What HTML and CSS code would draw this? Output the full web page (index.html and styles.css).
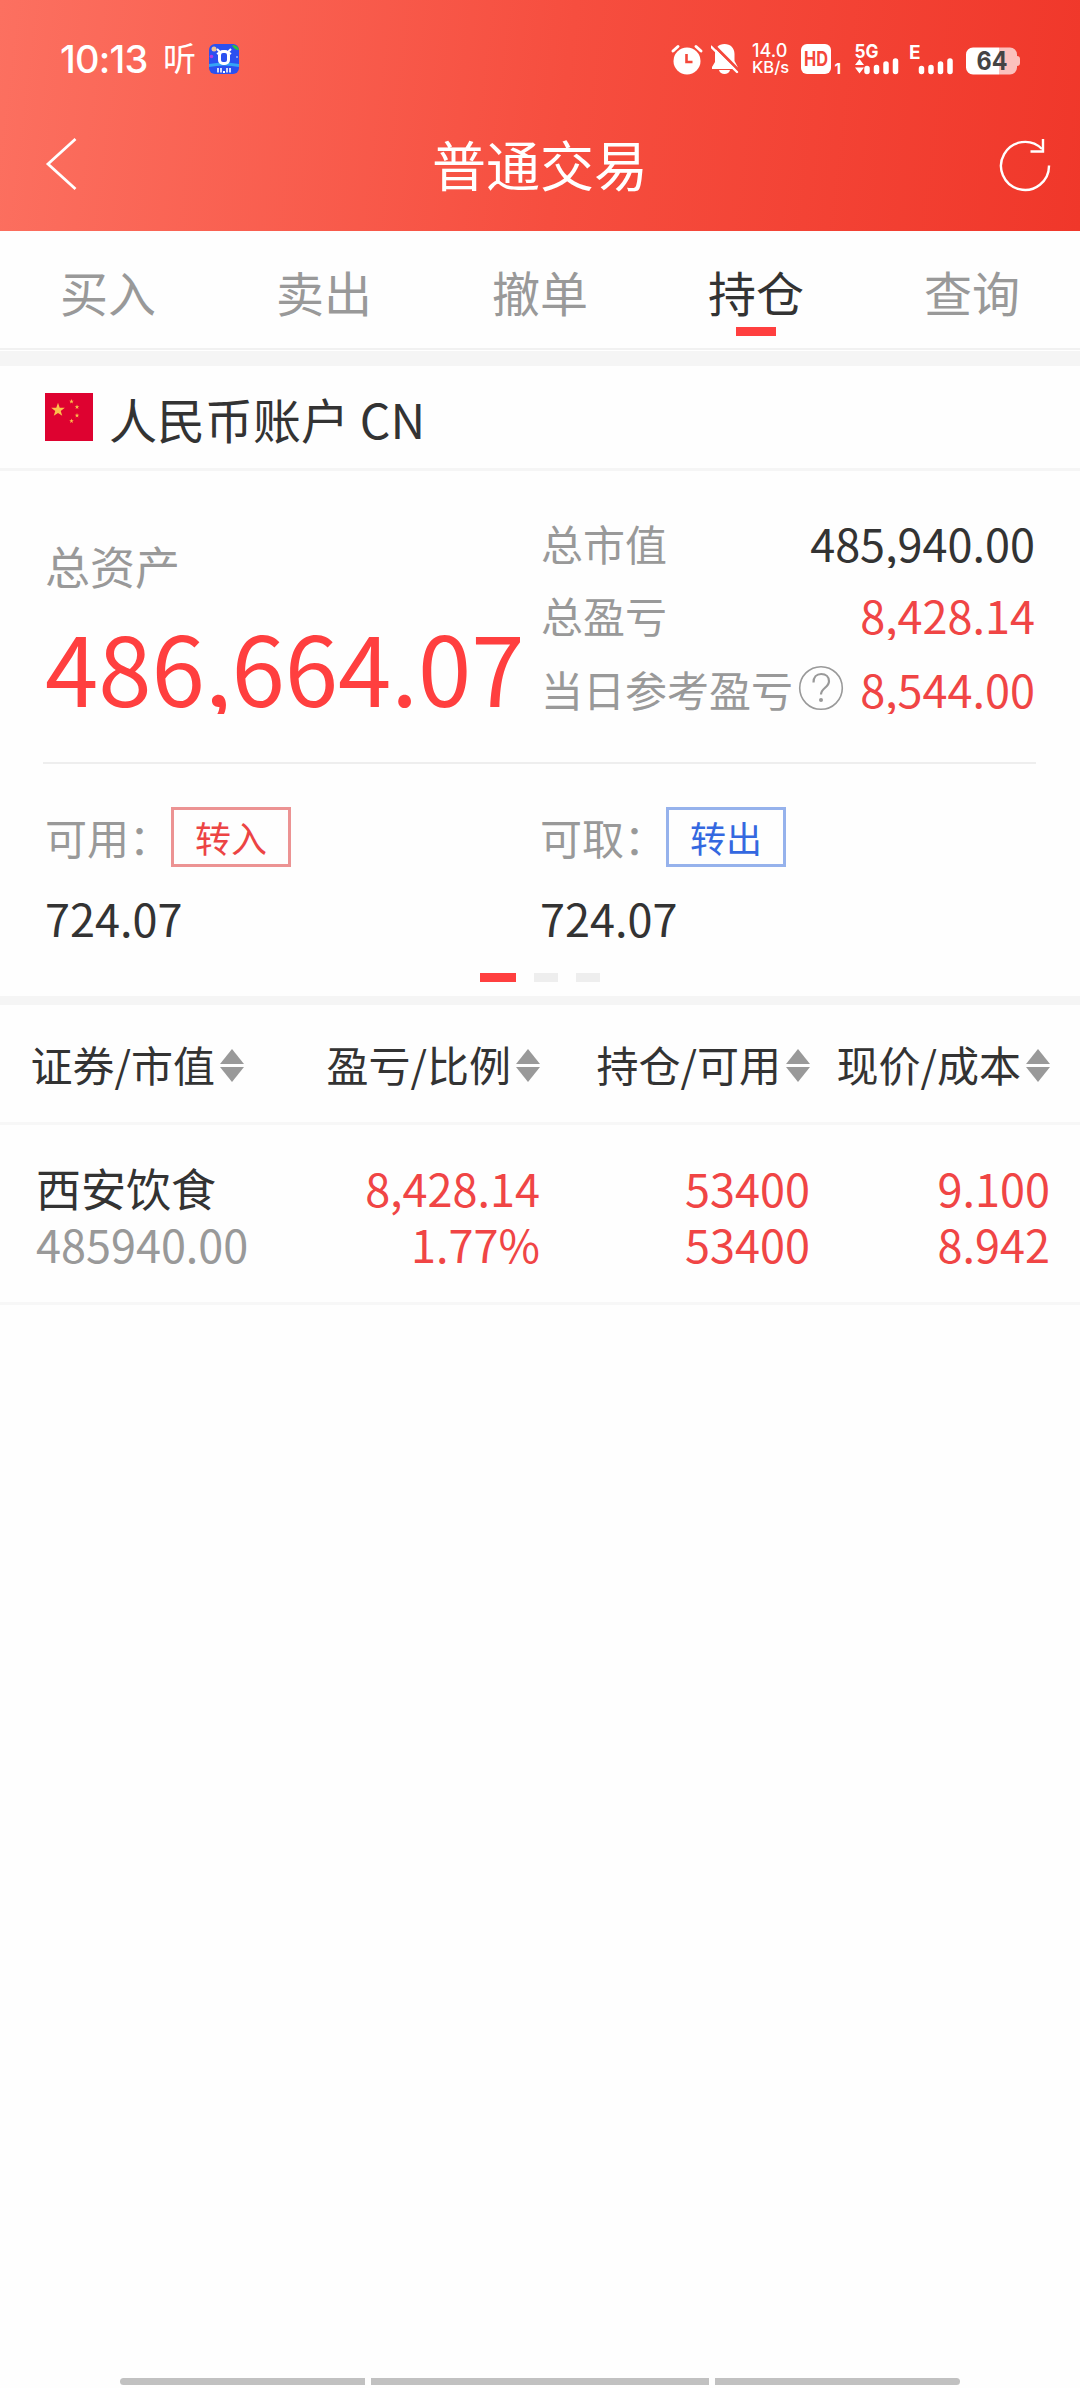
FILE: index.html
```html
<!DOCTYPE html>
<html lang="zh-CN">
<head>
    <meta charset="UTF-8">
    <meta name="viewport" content="width=device-width, initial-scale=1.0">
    <title>普通交易</title>
    <link rel="stylesheet" href="styles.css">
</head>
<body>
    <header class="header">
        <!-- Status bar -->
        <div class="status-bar">
            <span class="clock">10:13</span>
            <span class="carrier">听</span>
            <svg class="app-icon" width="30" height="30" viewBox="0 0 30 30">
                <rect width="30" height="30" rx="6" fill="#2b50f0"/>
                <path d="M0 20q15-3 30 0v3q-15-3-30 0z" fill="#35a5f5"/>
                <path d="M23 1q6 0 7 5q-5 0-7-5z" fill="#2fc53a"/>
                <circle cx="5" cy="5" r="2.500" fill="#e9c49a"/>
                <circle cx="2.500" cy="12.500" r="1.800" fill="#b43be0"/>
                <circle cx="28" cy="13" r="1" fill="#9ab8ff"/>
                <path d="M8 5l3 3h8l3-3M8 10l3-2M22 10l-3-2" fill="none" stroke="#fff" stroke-width="2"/>
                <rect x="10.500" y="7.500" width="9" height="12" rx="3.500" fill="#2b50f0" stroke="#fff" stroke-width="3"/>
                <path d="M9 24v4.500M12 24v4.500M18 24v4.500M21 24v4.500" stroke="#fff" stroke-width="1.600"/>
                <rect x="14" y="27" width="2" height="2" fill="#fff"/>
            </svg>

            <div class="status-right">
                <svg width="30" height="30" viewBox="0 0 30 30">
                    <circle cx="15" cy="17" r="13.500" fill="#fff"/>
                    <path d="M1 7l5-4.500M29 7l-5-4.500" stroke="#fff" stroke-width="3" stroke-linecap="round"/>
                    <path d="M14.500 10v8h6" fill="none" stroke="#f4473a" stroke-width="2.600"/>
                </svg>
                <svg class="bell" width="28" height="30" viewBox="0 0 28 30">
                    <path d="M13.500 0c6 0 10 4 10 10v7l3 5.500v2.500H1v-2l3-5v-8c0-6 3.500-10 9.500-10zM8 26h11c-1 5.300-10 5.300-11 0z" fill="#fff"/>
                    <path d="M1.500 0L29 27.500" stroke="#f4473a" stroke-width="3"/>
                    <path d="M0 2.500L26 28" stroke="#fff" stroke-width="2.400" stroke-linecap="round"/>
                </svg>
                <div class="net-speed"><span>14.0</span><span>KB/s</span></div>
                <svg class="hd" width="40" height="30" viewBox="0 0 40 30">
                    <rect width="30" height="30" rx="6" fill="#fff"/>
                    <text class="hd-text" x="3" y="22" textLength="24" lengthAdjust="spacingAndGlyphs">HD</text>
                    <text class="sim-text" x="33.500" y="29.500">1</text>
                </svg>
                <svg class="signal" width="44" height="30" viewBox="0 0 44 30">
                    <text class="net-text" x="-.500" y="14" textLength="24" lengthAdjust="spacingAndGlyphs">5G</text>
                    <path d="M0 21l4.500-6 4.500 6zM0 23.500h9l-4.500 6z" fill="#fff"/>
                    <path d="M12 24.500v3M21.500 23.500v4M31 20v7.500M40.500 17v10.500" stroke="#fff" stroke-width="5.500" stroke-linecap="round"/>
                </svg>
                <svg class="signal-e" width="44" height="30" viewBox="0 0 44 30">
                    <text class="net-text" x="-10" y="15">E</text>
                    <path d="M2.500 24.500v3M12 23.500v4M21.500 20v7.500M31 17v10.500" stroke="#fff" stroke-width="5.500" stroke-linecap="round"/>
                </svg>
                <svg class="battery" width="54" height="28" viewBox="0 0 54 28">
                    <path d="M7 .5h37a7 7 0 0 1 7 7V9q3 0 3 3v4q0 3-3 3v1.500a7 7 0 0 1-7 7H33V.5z" fill="#fbc1bd"/>
                    <path d="M7 .5h26v27H7a7 7 0 0 1-7-7v-13a7 7 0 0 1 7-7z" fill="#fff"/>
                    <text class="battery-text" x="10.500" y="23" textLength="31" lengthAdjust="spacingAndGlyphs">64</text>
                </svg>
            </div>
        </div>

        <!-- Title bar -->
        <div class="nav-bar">
            <svg width="32" height="54" viewBox="0 0 32 54">
                <path d="M30.500 2L3 27l27.500 25" fill="none" stroke="#fff" stroke-width="2.800"/>
            </svg>
            <h1 class="title">普通交易</h1>
            <svg width="52" height="54" viewBox="0 0 52 54">
                <path d="M50 28.500A24 24 0 1 1 43 12" fill="none" stroke="#fff" stroke-width="2.400"/>
                <path d="M44 2v12.500H31.500" fill="none" stroke="#fff" stroke-width="2.400"/>
            </svg>
        </div>
    </header>

    <nav class="tabs">
        <a class="tab">买入</a>
        <a class="tab">卖出</a>
        <a class="tab">撤单</a>
        <a class="tab active">持仓</a>
        <a class="tab">查询</a>
    </nav>

    <section class="account">
        <svg width="48" height="48" viewBox="0 0 48 48">
            <defs>
                <polygon id="star" points="0,-10 2.350,-3.240 9.510,-3.090 3.800,1.240 5.880,8.090 0,4 -5.880,8.090 -3.800,1.240 -9.510,-3.090 -2.350,-3.240"/>
            </defs>
            <rect width="48" height="48" fill="#de0230"/>
            <g fill="#fcc04c">
                <use href="#star" transform="translate(13 17) scale(.72)"/>
                <use href="#star" transform="translate(26.500 8.500) scale(.24)"/>
                <use href="#star" transform="translate(32 14) scale(.24)"/>
                <use href="#star" transform="translate(32 22.500) scale(.24)"/>
                <use href="#star" transform="translate(26.500 28) scale(.24)"/>
            </g>
        </svg>
        <span class="account-name">人民币账户 CN</span>
    </section>

    <!-- Assets -->
    <section class="assets">
        <div class="overview">
            <div class="total">
                <div class="total-label">总资产</div>
                <div class="total-value">486,664.07</div>
            </div>
            <div class="stats">
                <div class="stat"><span class="label">总市值</span><span class="value">485,940.00</span></div>
                <div class="stat"><span class="label">总盈亏</span><span class="value red">8,428.14</span></div>
                <div class="stat last">
                    <span class="label">当日参考盈亏</span>
                    <svg class="help" width="46" height="46" viewBox="0 0 46 46" fill="none" stroke="#999">
                        <circle cx="23" cy="23" r="21.300" stroke-width="1.600"/>
                        <path d="M15.500 17.500c0-5.500 3-8.500 7.700-8.500s7.800 3 7.800 7.200c0 6.300-8 6.800-8 13.300" stroke-width="2.200"/>
                        <circle cx="23" cy="35" r="2" fill="#999" stroke="none"/>
                    </svg>
                    <span class="value red">8,544.00</span>
                </div>
            </div>
        </div>
        <div class="funds">
            <div class="fund">
                <div class="fund-head"><span class="label">可用：</span><button class="btn btn-in">转入</button></div>
                <div class="fund-value">724.07</div>
            </div>
            <div class="fund">
                <div class="fund-head"><span class="label">可取：</span><button class="btn btn-out">转出</button></div>
                <div class="fund-value">724.07</div>
            </div>
        </div>
        <div class="dots"><i class="dot on"></i><i class="dot"></i><i class="dot"></i></div>
    </section>

    <!-- Holdings -->
    <section class="holdings">
        <div class="row head">
            <div class="cell">证券/市值<i class="sort"></i></div>
            <div class="cell">盈亏/比例<i class="sort"></i></div>
            <div class="cell">持仓/可用<i class="sort"></i></div>
            <div class="cell">现价/成本<i class="sort"></i></div>
        </div>
        <div class="row stock">
            <div class="stock-name"><p>西安饮食</p><p class="gray">485940.00</p></div>
            <div class="red"><p>8,428.14</p><p>1.77%</p></div>
            <div class="red"><p>53400</p><p>53400</p></div>
            <div class="red"><p>9.100</p><p>8.942</p></div>
        </div>
    </section>

    <footer class="gesture-bar"><i></i><i class="wide"></i><i></i></footer>
</body>
</html>
```
FILE: styles.css
```css
/* General Reset */
* {
    margin: 0;
    padding: 0;
    box-sizing: border-box;
}

body {
    width: 1080px;
    height: 2388px;
    display: flex;
    flex-direction: column;
    font-family: "Noto Sans CJK SC", sans-serif;
    font-size: 45px;
    color: #333;
    background: #fefefe;
    overflow: hidden;
}

svg {
    display: block;
    flex: none;
    overflow: visible;
}

/* Header */
.header {
    height: 231px;
    background: linear-gradient(97deg, #fc7060 0%, #f64e3f 52%, #f0372a 100%);
    color: #fff;
}

.status-bar {
    height: 96px;
    padding: 22px 60px 0;
    display: flex;
    align-items: center;
    font-family: Inter, sans-serif;
}

.clock {
    width: 103px;
    font-size: 38px;
    font-weight: 500;
    letter-spacing: -0.8px;
}

.carrier {
    width: 46px;
    font-family: "Noto Sans CJK SC", sans-serif;
    font-size: 33px;
    font-weight: 400;
    line-height: 34px;
    padding-bottom: 4px;
}

.status-right {
    display: flex;
    align-items: center;
    margin-left: auto;
}

.bell {
    margin-left: 9px;
    overflow: hidden;
}

.net-speed {
    width: 49px;
    margin-left: 13px;
    display: flex;
    flex-direction: column;
    font-size: 16.5px;
    font-weight: 500;
    line-height: 16px;
}

.net-speed span:first-child {
    font-size: 18px;
}

.status-bar text {
    fill: #fff;
    font-weight: 700;
}

.status-bar .hd-text {
    fill: #f4473a;
    font-size: 19.5px;
}

.sim-text {
    font-size: 15px;
}

.net-text {
    font-size: 19px;
}

.signal {
    margin-left: 14px;
}

.signal-e {
    margin-left: 20px;
}

.battery {
    margin: 3px 0 0 3px;
}

.status-bar .battery-text {
    fill: #444;
    font-size: 25px;
}

.nav-bar {
    height: 135px;
    padding: 0 29px 0 45px;
    display: flex;
    align-items: center;
    justify-content: space-between;
}

.title {
    margin-left: 4px;
    font-size: 54px;
    font-weight: 400;
    line-height: 60px;
}

/* Tabs */
.tabs {
    height: 135px;
    display: flex;
    border-bottom: 15px solid #f5f5f5;
    box-shadow: inset 0 -1px 0 #fff, inset 0 -3px 0 #f1f1f1;
}

.tab {
    flex: 1;
    display: flex;
    flex-direction: column;
    align-items: center;
    padding-top: 30px;
    font-size: 48px;
    line-height: 60px;
    color: #999;
}

.tab.active {
    color: #333;
}

.tab.active::after {
    content: "";
    width: 40px;
    height: 9px;
    margin-top: 6px;
    background: #ff3f3f;
}

/* Account */
.account {
    height: 105px;
    padding-left: 45px;
    display: flex;
    align-items: center;
    gap: 16px;
    font-size: 48px;
    border-bottom: 3px solid #f5f5f5;
}

.account-name {
    padding-top: 2px;
}

/* Assets */
.assets {
    height: 534px;
    border-bottom: 9px solid #f5f5f5;
}

.overview {
    height: 293px;
    margin: 0 44px 0 43px;
    padding-top: 45px;
    display: flex;
    border-bottom: 2px solid #eee;
}

.total {
    width: 498px;
    padding: 25px 0 0 2px;
}

.total-label {
    line-height: 50px;
    color: #999;
}

.total-value {
    margin-top: 23px;
    font-size: 96px;
    line-height: 103px;
    height: 100px;
    color: #ff3f3f;
    overflow: hidden;
}

.stats {
    flex: 1;
    padding-right: 1px;
}

.stat {
    height: 52px;
    margin-bottom: 20px;
    display: flex;
    align-items: center;
    line-height: 52px;
    overflow: hidden;
}

.stat.last {
    margin-top: 22px;
}

.label {
    font-size: 42px;
    color: #999;
}

.stat .label,
.stat .value {
    padding-top: 2px;
}

.value {
    margin-left: auto;
}

.help {
    margin-left: 5px;
}

.red {
    color: #f04545;
}

.funds {
    display: flex;
    padding: 43px 0 0 45px;
}

.fund {
    width: 495px;
}

.fund-head {
    display: flex;
    align-items: center;
    height: 60px;
}

.fund-head .label {
    width: 126px;
    line-height: 60px;
}

.btn {
    width: 120px;
    height: 60px;
    background: none;
    border: 3px solid;
    font-family: inherit;
    font-size: 36px;
    line-height: 52px;
}

.btn-in {
    color: #ec4444;
    border-color: #ec9393;
}

.btn-out {
    color: #3468e0;
    border-color: #96b2ec;
}

.fund-value {
    margin-top: 25px;
    line-height: 52px;
}

.dots {
    display: flex;
    justify-content: center;
    gap: 18px;
    margin-top: 29px;
}

.dot {
    width: 24px;
    height: 9px;
    background: #eee;
}

.dot.on {
    width: 36px;
    background: #ff3f3f;
}

/* Holdings */
.row {
    display: grid;
    grid-template-columns: 244px 296px 270px 240px;
    border-bottom: 3px solid #f7f7f7;
    text-align: right;
}

.head {
    height: 120px;
    font-size: 42px;
}

.cell {
    display: flex;
    align-items: center;
    justify-content: flex-end;
    gap: 5px;
}

.sort {
    display: flex;
    flex-direction: column;
    gap: 3px;
    padding-top: 4px;
}

.sort::before,
.sort::after {
    content: "";
    border: 12px solid transparent;
    border-top-width: 0;
    border-bottom: 15px solid #999;
}

.sort::after {
    border-top: 15px solid #999;
    border-bottom-width: 0;
}

.stock {
    height: 180px;
    padding-top: 35px;
    line-height: 56px;
}

.stock-name {
    padding-left: 36px;
    text-align: left;
    white-space: nowrap;
}

.gray {
    color: #999;
}

/* Gesture bar */
.gesture-bar {
    display: flex;
    justify-content: center;
    gap: 6px;
    margin-top: auto;
    padding-bottom: 3px;
}

.gesture-bar i {
    width: 245px;
    height: 7px;
    background: #c1c1c1;
}

.gesture-bar .wide {
    width: 338px;
}

.gesture-bar i:first-child {
    border-radius: 4px 0 0 4px;
}

.gesture-bar i:last-child {
    border-radius: 0 4px 4px 0;
}
```
